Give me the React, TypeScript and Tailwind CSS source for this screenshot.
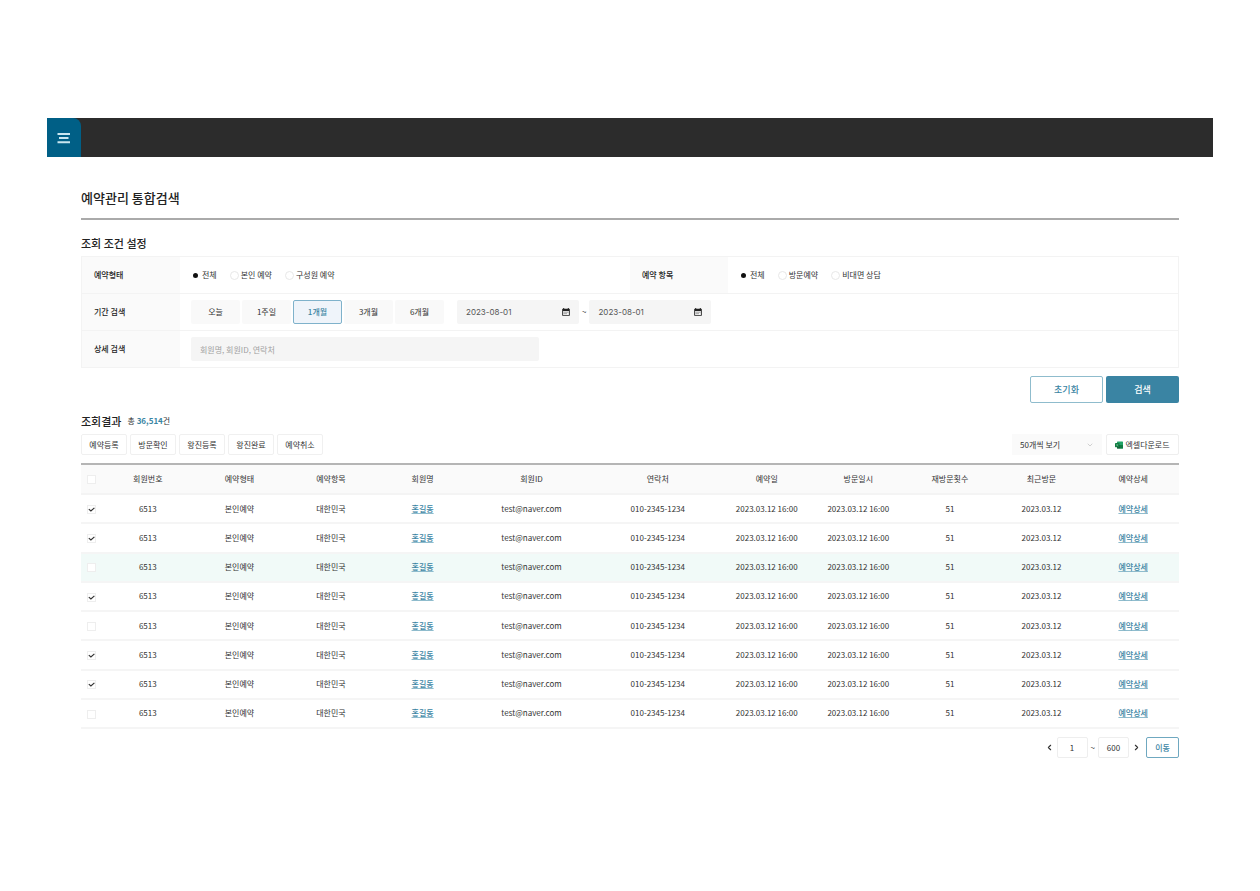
import { useState } from 'react';
import { ChevronDown, ChevronLeft, ChevronRight } from 'lucide-react';

interface Reservation {
  id: number;
  memberNo: string;
  type: string;
  item: string;
  name: string;
  email: string;
  phone: string;
  reservedAt: string;
  visitedAt: string;
  revisits: number;
  lastVisit: string;
}

const reservations: Reservation[] = Array.from({ length: 8 }, (_, id) => ({
  id,
  memberNo: '6513',
  type: '본인예약',
  item: '대한민국',
  name: '홍길동',
  email: 'test@naver.com',
  phone: '010-2345-1234',
  reservedAt: '2023.03.12 16:00',
  visitedAt: '2023.03.12 16:00',
  revisits: 51,
  lastVisit: '2023.03.12',
}));

const columns = [
  { label: '회원번호', width: '' },
  { label: '예약형태', width: '' },
  { label: '예약항목', width: '' },
  { label: '회원명', width: '' },
  { label: '회원ID', width: 'w-[11.5%]' },
  { label: '연락처', width: 'w-[11.5%]' },
  { label: '예약일', width: '' },
  { label: '방문일시', width: '' },
  { label: '재방문횟수', width: '' },
  { label: '최근방문', width: '' },
  { label: '예약상세', width: '' },
];

const periods = ['오늘', '1주일', '1개월', '3개월', '6개월'];
const actions = ['예약등록', '방문확인', '왕진등록', '왕진완료', '예약취소'];

function Checkbox({ label, checked, onChange }: { label: string; checked: boolean; onChange: () => void }) {
  return (
    <label className="inline-grid place-items-center align-middle">
      <input
        type="checkbox"
        aria-label={label}
        checked={checked}
        onChange={onChange}
        className="col-start-1 row-start-1 size-[9px] appearance-none border border-[#eeeeee] bg-white"
      />
      {checked && (
        <svg viewBox="0 0 9 9" className="pointer-events-none col-start-1 row-start-1 size-[9px]" fill="none">
          <path d="M1.8 4.1 3.9 6 7.4 2.9" stroke="#333333" strokeWidth="1.2" />
        </svg>
      )}
    </label>
  );
}

function RadioGroup({ name, options }: { name: string; options: string[] }) {
  return (
    <div className="flex items-center gap-[13px] pl-[11px]">
      {options.map((option, i) => (
        <label key={option} className="flex items-center gap-0.5">
          <input
            type="radio"
            name={name}
            defaultChecked={i === 0}
            className="size-[9px] appearance-none rounded-full border border-[#e8e8e8] bg-white checked:border-2 checked:border-white checked:bg-[#111111]"
          />
          {option}
        </label>
      ))}
    </div>
  );
}

function FieldLabel({ children }: { children: string }) {
  return (
    <div className="flex w-[98px] shrink-0 items-center self-stretch bg-[#fafafa] pl-3 font-medium text-[#222222]">
      {children}
    </div>
  );
}

function CalendarIcon() {
  return (
    <svg viewBox="0 0 8 8" className="size-2">
      <path
        fill="#222222"
        fillRule="evenodd"
        d="M1.2 0h1v.7h3.6V0h1v.7h.4c.4 0 .6.2.6.6v5.9c0 .4-.2.6-.6.6H.8c-.4 0-.6-.2-.6-.6V1.3c0-.4.2-.6.6-.6h.4zM1.100 3.100v3.800h5.800V3.100z"
      />
      <path d="M1.500 4.200h5M1.500 5.700h3.500" stroke="#888888" strokeWidth=".8" />
    </svg>
  );
}

function DateField({ label }: { label: string }) {
  return (
    <div className="flex h-6 w-[122px] items-center rounded-xs bg-[#f5f5f5] pr-[9px] pl-[9px]">
      <input
        type="text"
        aria-label={label}
        defaultValue="2023-08-01"
        className="w-full min-w-0 bg-transparent font-['Inter','Noto_Sans_CJK_KR',sans-serif] text-[8px] text-[#555555] outline-none"
      />
      <button type="button" aria-label={`${label} 선택`}>
        <CalendarIcon />
      </button>
    </div>
  );
}

function ExcelIcon() {
  return (
    <svg viewBox="0 0 8 8" className="size-2">
      <rect x="2" y=".5" width="6" height="7" rx=".6" fill="#21a366" />
      <path d="M5 4h3v2.9c0 .4-.2.6-.6.6H5z" fill="#107c41" />
      <path d="M2 4h3v3.5H2.6c-.4 0-.6-.2-.6-.6z" fill="#185c37" />
      <rect y="2" width="4.4" height="4.2" rx=".4" fill="#107c41" />
      <path d="m1.3 3 1.8 2.200M3.100 3 1.300 5.200" stroke="#d8f0e2" strokeWidth=".3" />
    </svg>
  );
}

export default function App() {
  const [period, setPeriod] = useState('1개월');
  const [selected, setSelected] = useState<number[]>([0, 1, 3, 5, 6]);

  const toggleRow = (id: number) => {
    setSelected(selected.includes(id) ? selected.filter((s) => s !== id) : [...selected, id]);
  };

  const allSelected = selected.length === reservations.length;
  const toggleAll = () => setSelected(allSelected ? [] : reservations.map((r) => r.id));

  return (
    <div className="min-h-screen bg-white px-[47px] py-[118px] font-['Noto_Sans_CJK_KR',sans-serif] text-[8px] leading-3 text-[#333333]">
      <header className="flex bg-[#2c2c2c]">
        <button
          type="button"
          aria-label="메뉴"
          className="flex h-[39px] w-[34px] items-center justify-center rounded-tr-lg bg-[#005f86]"
        >
          <svg viewBox="0 0 14 12" className="h-3 w-3.5" stroke="#c9e6f0" strokeWidth="2">
            <path d="M.5 2h12.500M2 6h9.500M.5 10.200h12.500" />
          </svg>
        </button>
      </header>

      <main className="px-[34px] pt-[31px]">
        <h1 className="border-b-2 border-[#aaaaaa] pb-[10px] text-[13px] leading-5 font-medium text-[#222222]">
          예약관리 통합검색
        </h1>

        <h2 className="mt-[15px] text-[11px] leading-4 font-medium text-[#222222]">조회 조건 설정</h2>
        <form onSubmit={(e) => e.preventDefault()}>
          <div className="mt-[5px] border border-b-0 border-[#f3f3f3]">
            <div className="flex h-[37px] border-b border-[#f3f3f3]">
              <div className="flex flex-1">
                <FieldLabel>예약형태</FieldLabel>
                <RadioGroup name="type" options={['전체', '본인 예약', '구성원 예약']} />
              </div>
              <div className="flex flex-1">
                <FieldLabel>예약 항목</FieldLabel>
                <RadioGroup name="item" options={['전체', '방문예약', '비대면 상담']} />
              </div>
            </div>

            <div className="flex h-[37px] items-center border-b border-[#f3f3f3]">
              <FieldLabel>기간 검색</FieldLabel>
              <div className="flex gap-0.5 pl-[11px]">
                {periods.map((p) => (
                  <button
                    key={p}
                    type="button"
                    onClick={() => setPeriod(p)}
                    className={
                      p === period
                        ? 'h-6 w-[49px] rounded-xs border border-[#7fb2cb] bg-[#eff4fa] font-medium text-[#3a84a3]'
                        : 'h-6 w-[49px] rounded-xs bg-[#f9f9f9]'
                    }
                  >
                    {p}
                  </button>
                ))}
              </div>
              <div className="ml-[13px] flex items-center gap-[3px]">
                <DateField label="시작일" />
                <span>~</span>
                <DateField label="종료일" />
              </div>
            </div>

            <div className="flex h-[37px] items-center border-b border-[#f3f3f3]">
              <FieldLabel>상세 검색</FieldLabel>
              <input
                type="text"
                aria-label="상세 검색"
                placeholder="회원명, 회원ID, 연락처"
                className="ml-[11px] h-6 w-[348px] rounded-xs bg-[#f5f5f5] px-[9px] outline-none placeholder:text-[#a0a0a0]"
              />
            </div>
          </div>

          <div className="mt-2 flex justify-end gap-[3px] text-[9px] font-medium">
            <button type="reset" className="h-[27px] w-[73px] rounded-xs border border-[#8fbccd] text-[#3a84a3]">
              초기화
            </button>
            <button type="submit" className="h-[27px] w-[73px] rounded-xs bg-[#3a84a3] text-white">
              검색
            </button>
          </div>
        </form>

        <div className="mt-[10px] flex items-center gap-[6px]">
          <h2 className="text-[11px] leading-4 font-medium text-[#222222]">조회결과</h2>
          <p>
            총 <strong className="font-bold text-[#3a84a3]">36,514</strong>건
          </p>
        </div>

        <div className="mt-[5px] flex justify-between">
          <div className="flex gap-[3px]">
            {actions.map((action) => (
              <button
                key={action}
                type="button"
                className="h-[21px] w-[46px] rounded-xs border border-[#f0f0f0] bg-white"
              >
                {action}
              </button>
            ))}
          </div>
          <div className="flex gap-1">
            <div className="grid w-[90px] items-center bg-[#fafafa]">
              <select
                aria-label="페이지당 개수"
                className="col-start-1 row-start-1 h-[21px] w-full appearance-none bg-transparent px-2 outline-none"
              >
                <option>50개씩 보기</option>
                <option>100개씩 보기</option>
              </select>
              <ChevronDown className="pointer-events-none col-start-1 row-start-1 mr-2 size-2 justify-self-end text-[#bbbbbb]" />
            </div>
            <button
              type="button"
              className="flex h-[21px] w-[73px] items-center justify-center gap-0.5 rounded-xs border border-[#eeeeee] bg-white"
            >
              <ExcelIcon />
              엑셀다운로드
            </button>
          </div>
        </div>

        <table className="mt-2 h-[266px] w-full table-fixed border-t-2 border-[#b5b5b5] text-center">
          <thead>
            <tr className="h-[30px] border-b-2 border-[#f4f4f4] bg-[#fafafa]">
              <th className="w-[21px]">
                <Checkbox label="전체 선택" checked={allSelected} onChange={toggleAll} />
              </th>
              {columns.map((col) => (
                <th key={col.label} className={`font-normal ${col.width}`}>
                  {col.label}
                </th>
              ))}
            </tr>
          </thead>
          <tbody>
            {reservations.map((row) => (
              <tr
                key={row.id}
                className={`h-[29px] border-b-2 border-[#f5f5f5] ${row.id === 2 ? 'bg-[#f1faf8]' : ''}`}
              >
                <td>
                  <Checkbox
                    label={`${row.id + 1}번 예약 선택`}
                    checked={selected.includes(row.id)}
                    onChange={() => toggleRow(row.id)}
                  />
                </td>
                <td>{row.memberNo}</td>
                <td>{row.type}</td>
                <td>{row.item}</td>
                <td>
                  <a href="#member" className="font-medium text-[#3a84a3] underline decoration-[#8fbccd]">
                    {row.name}
                  </a>
                </td>
                <td>{row.email}</td>
                <td>{row.phone}</td>
                <td>{row.reservedAt}</td>
                <td>{row.visitedAt}</td>
                <td>{row.revisits}</td>
                <td>{row.lastVisit}</td>
                <td>
                  <a href="#detail" className="font-medium text-[#3a84a3] underline decoration-[#8fbccd]">
                    예약상세
                  </a>
                </td>
              </tr>
            ))}
          </tbody>
        </table>

        <nav aria-label="페이지" className="mt-2 flex items-center justify-end gap-[3px]">
          <button type="button" aria-label="이전 페이지">
            <ChevronLeft className="size-[9px]" strokeWidth={3} />
          </button>
          <input
            type="text"
            aria-label="현재 페이지"
            defaultValue="1"
            className="h-[21px] w-[31px] rounded-xs border border-[#eeeeee] text-center outline-none"
          />
          <span>~</span>
          <input
            type="text"
            aria-label="마지막 페이지"
            defaultValue="600"
            className="h-[21px] w-[31px] rounded-xs border border-[#eeeeee] text-center outline-none"
          />
          <button type="button" aria-label="다음 페이지">
            <ChevronRight className="size-[9px]" strokeWidth={3} />
          </button>
          <button
            type="button"
            className="ml-0.5 h-[21px] w-[33px] rounded-xs border border-[#6fa8c0] font-medium text-[#3a84a3]"
          >
            이동
          </button>
        </nav>
      </main>
    </div>
  );
}
